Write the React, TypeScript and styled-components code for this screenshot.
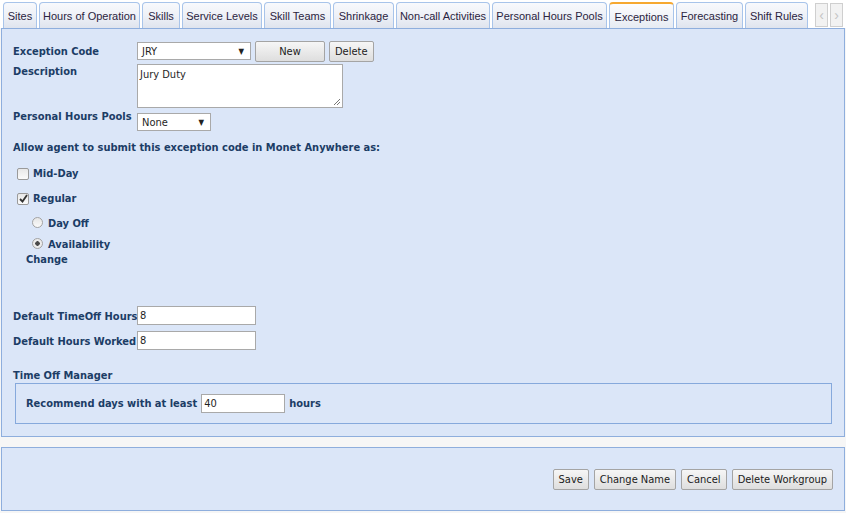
import styled, { createGlobalStyle } from "styled-components";

const navy = "#1c3d66";
const panelBlue = "#dbe6f8";
const panelBorder = "#8eaedd";
const labelFont = `"DejaVu Sans Condensed", "DejaVu Sans", "Liberation Sans", sans-serif`;
const tabFont = `"Liberation Sans", Arial, sans-serif`;

const GlobalStyle = createGlobalStyle`
  html, body {
    margin: 0;
    padding: 0;
    background: #ffffff;
  }
  * {
    box-sizing: border-box;
  }
`;

const Page = styled.div`
  width: 846px;
  height: 513px;
  display: flex;
  flex-direction: column;
  background: #f6f6f6;
  overflow: hidden;
`;

const TabBar = styled.div`
  display: flex;
  align-items: flex-end;
  height: 28px;
  padding-left: 3px;
  gap: 2px;
  background: #ffffff;
`;

const Tab = styled.div<{ active?: boolean; w: number }>`
  width: ${(p) => p.w}px;
  height: 26px;
  display: flex;
  align-items: center;
  justify-content: center;
  padding-top: ${(p) => (p.active ? "1px" : "0")};
  border: 1px solid #a8c4ea;
  border-top: ${(p) => (p.active ? "2px solid #f6a830" : "1px solid #a8c4ea")};
  border-bottom: none;
  border-radius: 4px 4px 0 0;
  background: ${(p) =>
    p.active
      ? "linear-gradient(#fdfdfe, #e6ebf3)"
      : "linear-gradient(#f8f9fc 0%, #eef1f7 50%, #dfe4ee 100%)"};
  font-family: ${tabFont};
  font-size: 11px;
  color: #2b2440;
  white-space: nowrap;
`;

const NavGroup = styled.div`
  display: flex;
  gap: 2px;
  margin-left: 5px;
  margin-bottom: 1px;
`;

const NavArrow = styled.div`
  width: 13px;
  height: 24px;
  border: 1px solid #cfcfcf;
  background: #f2f2f2;
  color: #c4c4c4;
  display: flex;
  align-items: center;
  justify-content: center;
  font-family: ${tabFont};
  font-size: 14px;
`;

const Panel = styled.div`
  margin: 0 1px;
  border: 1px solid ${panelBorder};
  background: ${panelBlue};
`;

const MainPanel = styled(Panel)`
  height: 409px;
  padding: 13px 12px 13px 11px;
  font-family: ${labelFont};
  font-size: 11px;
  color: ${navy};
`;

const FooterPanel = styled(Panel)`
  margin-top: 10px;
  height: 64px;
  display: flex;
  justify-content: flex-end;
  align-items: flex-start;
  padding: 21px 11px 0 0;
  gap: 5px;
`;

const FieldRow = styled.div<{ top?: number }>`
  display: flex;
  align-items: flex-start;
  margin-top: ${(p) => p.top ?? 0}px;
`;

const Label = styled.div<{ pad?: number }>`
  width: 124px;
  flex-shrink: 0;
  font-weight: bold;
  white-space: nowrap;
  padding-top: ${(p) => p.pad ?? 3}px;
  line-height: 13px;
`;

const Heading = styled.div<{ top: number }>`
  font-weight: bold;
  line-height: 13px;
  margin-top: ${(p) => p.top}px;
`;

const SelectBox = styled.div<{ w: number; top?: number }>`
  width: ${(p) => p.w}px;
  height: 18px;
  margin-top: ${(p) => p.top ?? 0}px;
  background: #ffffff;
  border: 1px solid #a9a9a9;
  display: flex;
  align-items: center;
  justify-content: space-between;
  padding: 0 6px 0 4px;
  font-size: 11px;
  color: #1f1f1f;
  font-weight: normal;
`;

const Caret = styled.span`
  font-size: 8px;
  color: #222;
`;

const Button = styled.button<{ w?: number }>`
  height: 21px;
  ${(p) => (p.w ? `width: ${p.w}px;` : "")}
  padding: 0 5px;
  margin: 0;
  border: 1px solid #a4a4a4;
  border-radius: 2px;
  background: linear-gradient(#f6f6f6, #dedede);
  font-family: ${labelFont};
  font-size: 11px;
  color: #1b1b1b;
  cursor: pointer;
`;

const ButtonGroup = styled.div`
  display: flex;
  gap: 4px;
  margin-left: 4px;
  margin-top: -1px;
`;

const TextArea = styled.div`
  width: 206px;
  height: 44px;
  background: #ffffff;
  border: 1px solid #a9a9a9;
  padding: 3px 2px;
  font-size: 11px;
  color: #1f1f1f;
  position: relative;
`;

const Grip = styled.svg`
  position: absolute;
  right: 1px;
  bottom: 1px;
`;

const CheckRow = styled.div<{ top: number }>`
  display: flex;
  align-items: center;
  margin-top: ${(p) => p.top}px;
  margin-left: 4px;
  font-weight: bold;
  line-height: 13px;
`;

const CheckBox = styled.span`
  width: 12px;
  height: 12px;
  border: 1px solid #9a9a9a;
  border-radius: 2px;
  background: linear-gradient(#e8e8e8, #fbfbfb);
  margin-right: 4px;
  display: inline-flex;
  align-items: center;
  justify-content: center;
`;

const RadioLine = styled.div<{ top: number }>`
  width: 96px;
  margin-left: 13px;
  margin-top: ${(p) => p.top}px;
  font-weight: bold;
  line-height: 15px;
`;

const Radio = styled.span<{ on?: boolean }>`
  display: inline-block;
  vertical-align: -1px;
  width: 11px;
  height: 11px;
  border-radius: 50%;
  border: 1px solid #a3a3a3;
  background: ${(p) =>
    p.on
      ? "radial-gradient(circle, #4a4a4a 0 2px, #ececec 2.5px)"
      : "linear-gradient(#e6e6e6, #fafafa)"};
  margin: 0 5px 0 6px;
`;

const TextInput = styled.div<{ w: number }>`
  width: ${(p) => p.w}px;
  height: 19px;
  background: #ffffff;
  border: 1px solid #a9a9a9;
  padding: 0 2px;
  display: flex;
  align-items: center;
  font-size: 11px;
  font-weight: normal;
  color: #1f1f1f;
`;

const FieldSet = styled.div`
  margin: 1px 0 0 2px;
  height: 41px;
  border: 1px solid #86a9dc;
  display: flex;
  align-items: flex-start;
  padding: 10px 0 0 10px;
  font-weight: bold;
  gap: 4px;
`;

const InlineText = styled.span`
  line-height: 19px;
`;

const tabs = [
  { name: "Sites", w: 34 },
  { name: "Hours of Operation", w: 101 },
  { name: "Skills", w: 38 },
  { name: "Service Levels", w: 80 },
  { name: "Skill Teams", w: 67 },
  { name: "Shrinkage", w: 61 },
  { name: "Non-call Activities", w: 94 },
  { name: "Personal Hours Pools", w: 115 },
  { name: "Exceptions", w: 65 },
  { name: "Forecasting", w: 67 },
  { name: "Shift Rules", w: 63 },
];

export default function App() {
  return (
    <>
      <GlobalStyle />
      <Page>
        <TabBar>
          {tabs.map((t) => (
            <Tab key={t.name} w={t.w} active={t.name === "Exceptions"}>
              {t.name}
            </Tab>
          ))}
          <NavGroup>
            <NavArrow>‹</NavArrow>
            <NavArrow>›</NavArrow>
          </NavGroup>
        </TabBar>

        <MainPanel>
          <FieldRow>
            <Label>Exception Code</Label>
            <SelectBox w={114}>
              <span>JRY</span>
              <Caret>▼</Caret>
            </SelectBox>
            <ButtonGroup>
              <Button w={70}>New</Button>
              <Button>Delete</Button>
            </ButtonGroup>
          </FieldRow>

          <FieldRow top={2}>
            <Label pad={1}>Description</Label>
            <TextArea>
              Jury Duty
              <Grip width="8" height="8" viewBox="0 0 8 8">
                <path d="M7 1 L1 7 M7 4 L4 7" stroke="#777" strokeWidth="1" />
              </Grip>
            </TextArea>
          </FieldRow>

          <FieldRow top={2}>
            <Label pad={0}>Personal Hours Pools</Label>
            <SelectBox w={74} top={3}>
              <span>None</span>
              <Caret>▼</Caret>
            </SelectBox>
          </FieldRow>

          <Heading top={10}>
            Allow agent to submit this exception code in Monet Anywhere as:
          </Heading>

          <CheckRow top={13}>
            <CheckBox />
            Mid-Day
          </CheckRow>
          <CheckRow top={12}>
            <CheckBox>
              <svg width="9" height="9" viewBox="0 0 9 9">
                <path d="M1 5 L3.5 7.5 L8 1" stroke="#333" strokeWidth="1.8" fill="none" />
              </svg>
            </CheckBox>
            Regular
          </CheckRow>

          <RadioLine top={11}>
            <Radio />
            Day Off
          </RadioLine>
          <RadioLine top={6}>
            <Radio on />
            Availability Change
          </RadioLine>

          <FieldRow top={39}>
            <Label pad={4}>Default TimeOff Hours</Label>
            <TextInput w={119}>8</TextInput>
          </FieldRow>
          <FieldRow top={6}>
            <Label pad={4}>Default Hours Worked</Label>
            <TextInput w={119}>8</TextInput>
          </FieldRow>

          <Heading top={19}>Time Off Manager</Heading>
          <FieldSet>
            <InlineText>Recommend days with at least</InlineText>
            <TextInput w={84}>40</TextInput>
            <InlineText>hours</InlineText>
          </FieldSet>
        </MainPanel>

        <FooterPanel>
          <Button>Save</Button>
          <Button>Change Name</Button>
          <Button>Cancel</Button>
          <Button>Delete Workgroup</Button>
        </FooterPanel>
      </Page>
    </>
  );
}
